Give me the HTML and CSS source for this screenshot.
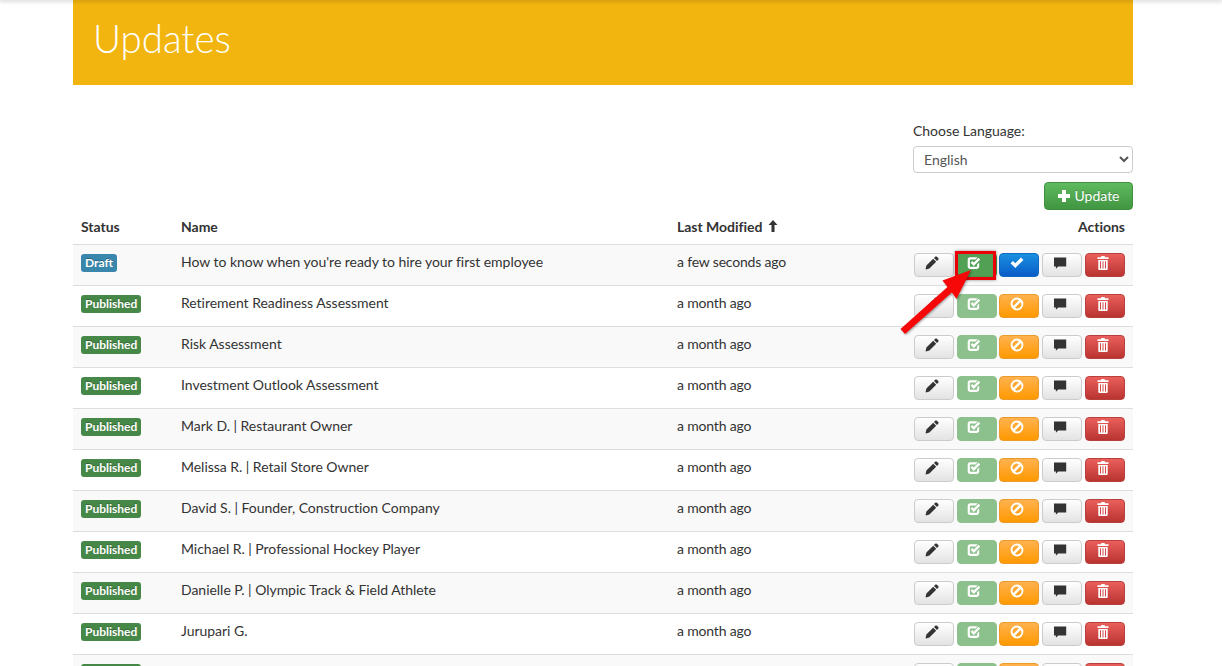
FILE: index.html
```html
<!DOCTYPE html>
<html lang="en">
<head>
<meta charset="utf-8">
<title>Updates</title>
<link rel="stylesheet" href="styles.css">
</head>
<body>
<svg class="defs" width="0" height="0" aria-hidden="true">
  <symbol id="i-pencil" viewBox="0 0 14 14"><path d="M10.2.8c.5-.5 1.200-.5 1.700 0l1.300 1.300c.5.5.5 1.200 0 1.700l-1.200 1.200-3-3zM8.200 2.800l3 3L4.400 12.600 1 13.400.6 13l.8-3.400z"/></symbol>
  <symbol id="i-check" viewBox="0 0 14 14"><path d="M3 1.300h7.600L8.600 3.400H3.400c-.3 0-.5.2-.5.500v6.300c0 .3.2.5.5.5h6.200c.3 0 .5-.2.500-.5V8.500l2.100-2.100v4.200c0 1.300-1 2.300-2.300 2.300H3c-1.300 0-2.300-1-2.300-2.300V3.600c0-1.300 1-2.300 2.300-2.300z"/><path d="M6.800 10 3.600 6.800l1.700-1.700 1.500 1.500L11.500 1.800l1.700 1.700z"/></symbol>
  <symbol id="i-ok" viewBox="0 0 14 14"><path d="M5.300 12 .6 7.300 3 4.900l2.300 2.300 5.700-5.700 2.400 2.400z"/></symbol>
  <symbol id="i-ban" viewBox="0 0 14 14"><path fill-rule="evenodd" d="M7 .6a6.400 6.400 0 1 1 0 12.800A6.400 6.400 0 0 1 7 .6zM3.300 9 9 3.300A4.100 4.100 0 0 0 3.300 9zM5 10.700A4.100 4.100 0 0 0 10.700 5z"/></symbol>
  <symbol id="i-comment" viewBox="0 0 14 14"><path d="M1 1.500h12.200v8.900H5.200l-2.300 2.400v-2.400H1z"/></symbol>
  <symbol id="i-trash" viewBox="0 0 14 14"><path fill-rule="evenodd" d="M5.400 0h3.200l.5 1.300h3.400v1.800H1.500V1.300h3.400zM2.300 3.900h9.400v9.200c0 .5-.4.900-.9.900H3.200c-.5 0-.9-.4-.9-.9zM4 5.300v7.200h1V5.300zm2.500 0v7.200h1V5.300zm2.500 0v7.200h1V5.300z"/></symbol>
  <symbol id="i-plus" viewBox="0 0 14 14"><path d="M5 1h4v4h4v4H9v4H5V9H1V5h4z"/></symbol>
  <symbol id="i-up" viewBox="0 0 14 14"><path d="M7 1l4.500 5H8.500v7h-3V6H2.500z"/></symbol>
</svg>
<div class="topshade"></div>
<main class="page">
  <header class="banner"><h1 class="banner-title">Updates</h1></header>

  <section class="controls">
    <label class="lang-label" for="lang">Choose Language:</label>
    <select class="lang-select" id="lang"><option>English</option></select>
    <button class="btn-add" type="button"><svg class="ico-add"><use href="#i-plus"/></svg>Update</button>
  </section>

  <table class="grid">
    <colgroup><col class="c-status"><col class="c-name"><col class="c-mod"><col class="c-act"></colgroup>
    <thead>
      <tr><th>Status</th><th>Name</th><th>Last Modified <svg class="ico-sort"><use href="#i-up"/></svg></th><th class="right">Actions</th></tr>
    </thead>
    <tbody>
      <tr><td><span class="tag tag-draft">Draft</span></td><td>How to know when you're ready to hire your first employee</td><td>a few seconds ago</td><td><div class="acts"><button class="act neutral"><svg><use href="#i-pencil"/></svg></button><button class="act go"><svg><use href="#i-check"/></svg></button><button class="act blue"><svg><use href="#i-ok"/></svg></button><button class="act neutral"><svg><use href="#i-comment"/></svg></button><button class="act red"><svg><use href="#i-trash"/></svg></button></div></td></tr>
      <tr><td><span class="tag tag-pub">Published</span></td><td>Retirement Readiness Assessment</td><td>a month ago</td><td><div class="acts"><button class="act neutral"><svg><use href="#i-pencil"/></svg></button><button class="act soft"><svg><use href="#i-check"/></svg></button><button class="act orange"><svg><use href="#i-ban"/></svg></button><button class="act neutral"><svg><use href="#i-comment"/></svg></button><button class="act red"><svg><use href="#i-trash"/></svg></button></div></td></tr>
      <tr><td><span class="tag tag-pub">Published</span></td><td>Risk Assessment</td><td>a month ago</td><td><div class="acts"><button class="act neutral"><svg><use href="#i-pencil"/></svg></button><button class="act soft"><svg><use href="#i-check"/></svg></button><button class="act orange"><svg><use href="#i-ban"/></svg></button><button class="act neutral"><svg><use href="#i-comment"/></svg></button><button class="act red"><svg><use href="#i-trash"/></svg></button></div></td></tr>
      <tr><td><span class="tag tag-pub">Published</span></td><td>Investment Outlook Assessment</td><td>a month ago</td><td><div class="acts"><button class="act neutral"><svg><use href="#i-pencil"/></svg></button><button class="act soft"><svg><use href="#i-check"/></svg></button><button class="act orange"><svg><use href="#i-ban"/></svg></button><button class="act neutral"><svg><use href="#i-comment"/></svg></button><button class="act red"><svg><use href="#i-trash"/></svg></button></div></td></tr>
      <tr><td><span class="tag tag-pub">Published</span></td><td>Mark D. | Restaurant Owner</td><td>a month ago</td><td><div class="acts"><button class="act neutral"><svg><use href="#i-pencil"/></svg></button><button class="act soft"><svg><use href="#i-check"/></svg></button><button class="act orange"><svg><use href="#i-ban"/></svg></button><button class="act neutral"><svg><use href="#i-comment"/></svg></button><button class="act red"><svg><use href="#i-trash"/></svg></button></div></td></tr>
      <tr><td><span class="tag tag-pub">Published</span></td><td>Melissa R. | Retail Store Owner</td><td>a month ago</td><td><div class="acts"><button class="act neutral"><svg><use href="#i-pencil"/></svg></button><button class="act soft"><svg><use href="#i-check"/></svg></button><button class="act orange"><svg><use href="#i-ban"/></svg></button><button class="act neutral"><svg><use href="#i-comment"/></svg></button><button class="act red"><svg><use href="#i-trash"/></svg></button></div></td></tr>
      <tr><td><span class="tag tag-pub">Published</span></td><td>David S. | Founder, Construction Company</td><td>a month ago</td><td><div class="acts"><button class="act neutral"><svg><use href="#i-pencil"/></svg></button><button class="act soft"><svg><use href="#i-check"/></svg></button><button class="act orange"><svg><use href="#i-ban"/></svg></button><button class="act neutral"><svg><use href="#i-comment"/></svg></button><button class="act red"><svg><use href="#i-trash"/></svg></button></div></td></tr>
      <tr><td><span class="tag tag-pub">Published</span></td><td>Michael R. | Professional Hockey Player</td><td>a month ago</td><td><div class="acts"><button class="act neutral"><svg><use href="#i-pencil"/></svg></button><button class="act soft"><svg><use href="#i-check"/></svg></button><button class="act orange"><svg><use href="#i-ban"/></svg></button><button class="act neutral"><svg><use href="#i-comment"/></svg></button><button class="act red"><svg><use href="#i-trash"/></svg></button></div></td></tr>
      <tr><td><span class="tag tag-pub">Published</span></td><td>Danielle P. | Olympic Track &amp; Field Athlete</td><td>a month ago</td><td><div class="acts"><button class="act neutral"><svg><use href="#i-pencil"/></svg></button><button class="act soft"><svg><use href="#i-check"/></svg></button><button class="act orange"><svg><use href="#i-ban"/></svg></button><button class="act neutral"><svg><use href="#i-comment"/></svg></button><button class="act red"><svg><use href="#i-trash"/></svg></button></div></td></tr>
      <tr><td><span class="tag tag-pub">Published</span></td><td>Jurupari G.</td><td>a month ago</td><td><div class="acts"><button class="act neutral"><svg><use href="#i-pencil"/></svg></button><button class="act soft"><svg><use href="#i-check"/></svg></button><button class="act orange"><svg><use href="#i-ban"/></svg></button><button class="act neutral"><svg><use href="#i-comment"/></svg></button><button class="act red"><svg><use href="#i-trash"/></svg></button></div></td></tr>
      <tr><td><span class="tag tag-pub">Published</span></td><td></td><td></td><td><div class="acts"><button class="act neutral"><svg><use href="#i-pencil"/></svg></button><button class="act soft"><svg><use href="#i-check"/></svg></button><button class="act orange"><svg><use href="#i-ban"/></svg></button><button class="act neutral"><svg><use href="#i-comment"/></svg></button><button class="act red"><svg><use href="#i-trash"/></svg></button></div></td></tr>
    </tbody>
  </table>

  <div class="mark-box"></div>
  <svg class="mark-arrow" viewBox="0 0 90 80" width="90" height="80" aria-hidden="true">
    <path d="M70 2 55.500 31 50.800 24.500 4 66 -.5 61 46.500 19 41.500 12.500z" fill="#f60808"/>
  </svg>
</main>
</body>
</html>
```
FILE: styles.css
```css
* { box-sizing: border-box; }
html, body { margin: 0; height: 666px; overflow: hidden; background: #fff; }
body { font-family: Lato, "Open Sans", Arial, sans-serif; font-size: 14px; line-height: 20px; color: #333; letter-spacing: -.03px; }
.defs { position: absolute; }
.topshade { position: absolute; top: 0; left: 0; right: 0; height: 0; box-shadow: 0 0 4px 1px rgba(0,0,0,.28); z-index: 3; }

.page { position: relative; width: 1060px; margin-left: 73px; }
.banner { height: 85px; background: #f2b50f; padding: 13px 20px 0; }
.banner-title { margin: 0; color: #fff; font-size: 38.500px; line-height: 50px; font-weight: 300; letter-spacing: 0; }

.controls { display: flex; flex-direction: column; align-items: flex-end; padding-top: 36px; }
.lang-label { width: 220px; height: 20px; margin-bottom: 5px; }
.lang-select { width: 220px; height: 27px; padding: 0 6px; font: 14px/20px Lato, sans-serif; color: #555; background: #fff; border: 1px solid #ccc; border-radius: 4px; }
.btn-add { width: 89px; height: 28px; margin-top: 9px; padding: 0; display: flex; align-items: center; justify-content: center; gap: 3px; color: #fff; font: 14px/20px Lato, sans-serif; border: 1px solid #3e8f3e; border-radius: 4px; background: linear-gradient(#5fba5f, #419641); text-shadow: 0 -1px 0 rgba(0,0,0,.2); }
.ico-add { width: 14px; height: 14px; fill: #fff; }

.grid { width: 1060px; table-layout: fixed; border-collapse: separate; border-spacing: 0; }
.c-status { width: 100px; }
.c-name { width: 496px; }
.c-mod { width: 200px; }
.c-act { width: 264px; }
.grid th { padding: 7px 8px; text-align: left; font-weight: 700; border-bottom: 1px solid #ddd; }
.grid th.right { text-align: right; }
.grid td { padding: 8px; border-bottom: 1px solid #ddd; vertical-align: top; }
.grid td:nth-child(2), .grid td:nth-child(3) { padding: 7px 8px 9px; }
.grid td:nth-child(3) { letter-spacing: -.18px; }
.grid tbody tr:nth-child(odd) td { background: #f9f9f9; }
.ico-sort { width: 14px; height: 14px; vertical-align: -1px; fill: #333; }

.tag { display: inline-block; height: 18px; padding: 0 4px; margin-top: 1px; border-radius: 3px; color: #fff; font-size: 12px; line-height: 18px; font-weight: 700; letter-spacing: 0; text-shadow: 0 -1px 0 rgba(0,0,0,.25); vertical-align: top; }
.tag-draft { background: #3a87ad; }
.tag-pub { background: #468847; }

.acts { display: flex; justify-content: flex-end; gap: 2.8px; }
.act { width: 40px; height: 24px; padding: 0; display: flex; align-items: center; justify-content: center; border: 1px solid; border-radius: 4px; }
.act svg { width: 14px; height: 14px; margin: -5px 0 0 -4px; }
.act.go svg, .act.soft svg { margin-left: -6px; }
.neutral { background: linear-gradient(#fff, #e3e3e3); border-color: #ccc; fill: #333; }
.go { background: #51a054; border-color: #4a944d; fill: #fff; }
.soft { background: #8cc08c; border-color: #8cc08c; fill: #fff; }
.blue { background: linear-gradient(#1a90e0, #0a5cc8); border-color: #0e6cc4; fill: #fff; }
.orange { background: linear-gradient(#ffb24f, #f90); border-color: #ec9a2a; fill: #fff; }
.red { background: linear-gradient(#ea5f5c, #b93431); border-color: #b8403c; fill: #fff; }

.mark-box { position: absolute; left: 882px; top: 251px; width: 41px; height: 29px; border: 3px solid #ec0008; box-shadow: 0 0 3px rgba(0,0,0,.45); }
.mark-arrow { position: absolute; left: 828px; top: 268px; overflow: visible; filter: drop-shadow(1px 1px 1px rgba(0,0,0,.35)); }
```
